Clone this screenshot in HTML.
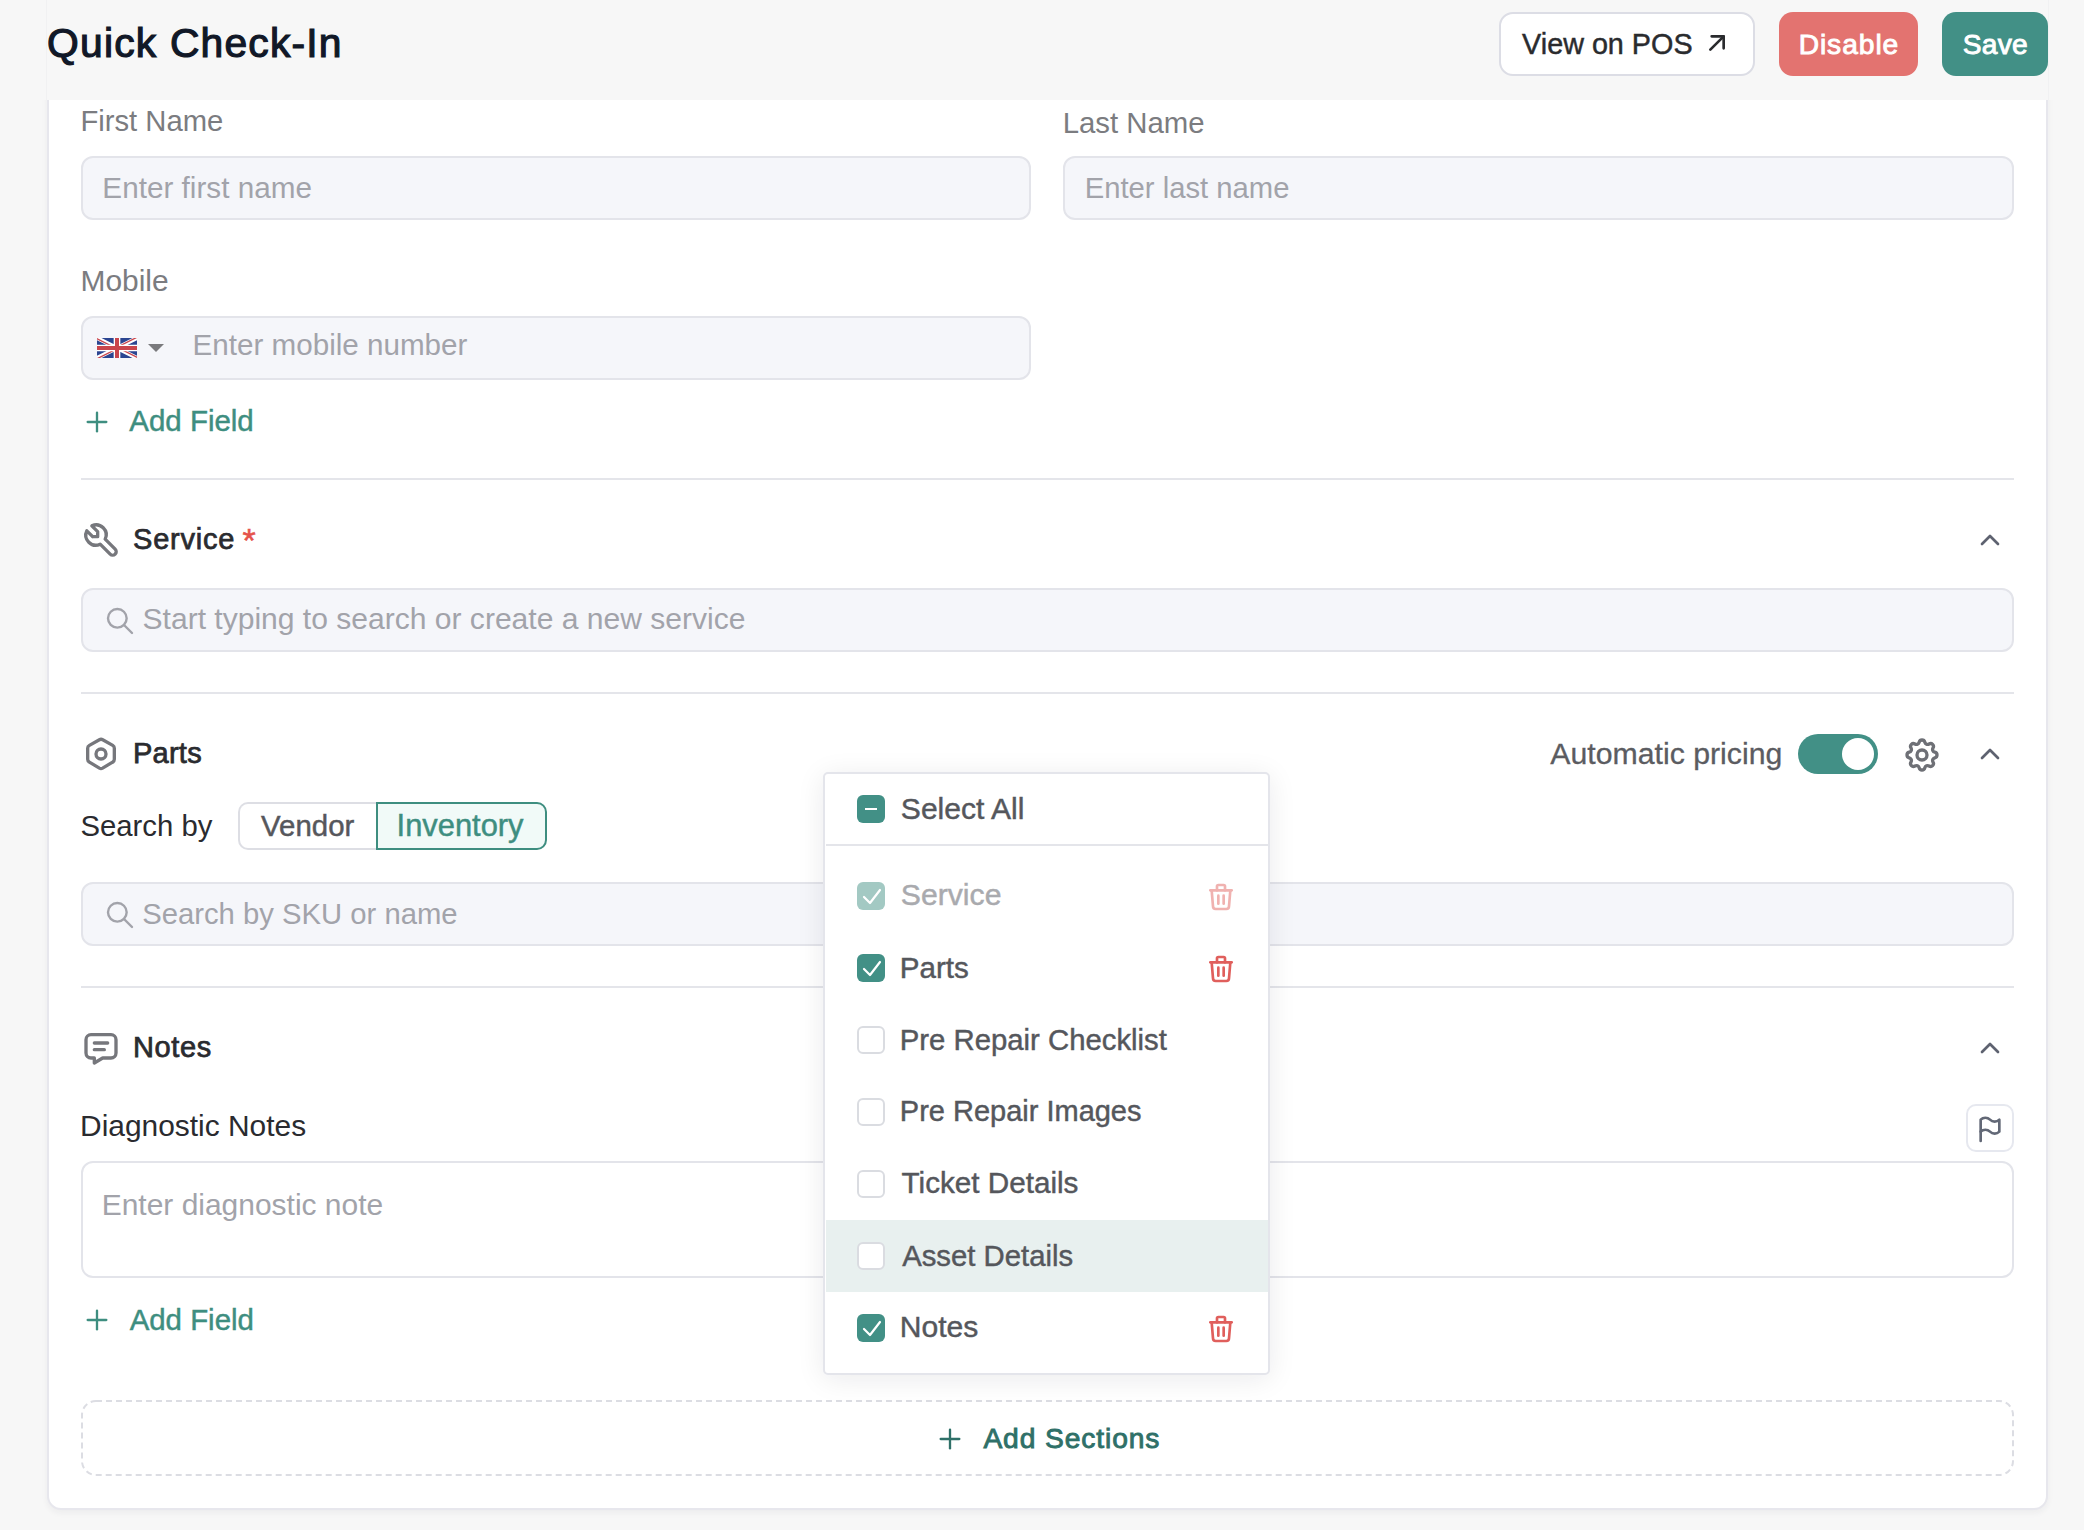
<!DOCTYPE html>
<html><head><meta charset="utf-8">
<style>
*{box-sizing:border-box;margin:0;padding:0}
html,body{width:2084px;height:1530px;overflow:hidden;background:#f7f7f7;font-family:"Liberation Sans",sans-serif}
.a{position:absolute;white-space:nowrap}
.card{position:absolute;left:47px;top:40px;width:2001px;height:1470px;background:#fff;border:2px solid #e7e7ed;border-radius:14px;box-shadow:0 3px 6px rgba(30,30,60,.05)}
.header{position:absolute;left:0;top:0;width:2084px;height:100px;background:#f7f7f7}
.btn{position:absolute;top:12px;height:64px;border-radius:14px}
.input{position:absolute;height:64px;background:#f5f6fa;border:2px solid #e3e4ea;border-radius:12px}
.div{position:absolute;left:81px;width:1933px;height:2px;background:#e4e5ea}
svg.i{position:absolute;fill:none;stroke-linecap:round;stroke-linejoin:round}
.cb{position:absolute;left:857px;width:28px;height:28px;border-radius:6px}
.cb.on{background:#429086}
.cb.dis{background:#a3c9c3}
.cb.off{background:#fff;border:2px solid #dadce1}
</style></head>
<body>
<div class="card"></div>
<div class="header"></div>
<div class="a" style="left:46px;top:0;width:1px;height:100px;background:#f1f1f2"></div>
<div class="a" style="left:2048px;top:0;width:1px;height:100px;background:#f1f1f2"></div>
<div class="btn" style="left:1499px;width:256px;background:#fff;border:2px solid #dcdde5"></div>
<div class="btn" style="left:1779px;width:139px;background:#e37370"></div>
<div class="btn" style="left:1942px;width:106px;background:#429086"></div>
<svg class="i" style="left:1701px;top:27px" width="32" height="32" viewBox="0 0 24 24" stroke="#2a2b2e" stroke-width="2"><path d="M17 7l-10 10"/><path d="M8 7l9 0l0 9"/></svg>
<div class="input" style="left:81px;top:156px;width:950px"></div>
<div class="input" style="left:1063px;top:156px;width:951px"></div>
<div class="input" style="left:81px;top:316px;width:950px"></div>
<svg class="a" style="left:97px;top:338px" width="40" height="20" viewBox="0 0 60 30">
<clipPath id="uk"><path d="M30,15 h30 v15 z v15 h-30 z h-30 v-15 z v-15 h30 z"/></clipPath>
<rect width="60" height="30" fill="#2b4591"/>
<path d="M0,0 L60,30 M60,0 L0,30" stroke="#fff" stroke-width="6"/>
<path d="M0,0 L60,30 M60,0 L0,30" clip-path="url(#uk)" stroke="#c9454c" stroke-width="4"/>
<path d="M30,0 v30 M0,15 h60" stroke="#fff" stroke-width="10"/>
<path d="M30,0 v30 M0,15 h60" stroke="#c9454c" stroke-width="6"/>
</svg>
<svg class="a" style="left:148px;top:344px" width="16" height="8" viewBox="0 0 16 8"><path d="M0 0h16l-8 8z" fill="#7a7a7d"/></svg>
<svg class="i" style="left:80.8px;top:405.7px" width="32" height="32" viewBox="0 0 24 24" stroke="#3e8e80" stroke-width="1.75"><path d="M12 5l0 14"/><path d="M5 12l14 0"/></svg>
<div class="div" style="top:478px"></div>
<svg class="i" style="left:81px;top:520px" width="40" height="40" viewBox="0 0 24 24" stroke="#76777c" stroke-width="2"><path d="M7 10h3v-3l-3.5 -3.5a6 6 0 0 1 8 8l6 6a2 2 0 0 1 -3 3l-6 -6a6 6 0 0 1 -8 -8l3.5 3.5"/></svg>
<svg class="i" style="left:1973.7px;top:523.6px" width="32" height="32" viewBox="0 0 24 24" stroke="#5e6270" stroke-width="2"><path d="M6 15l6 -6l6 6"/></svg>
<div class="input" style="left:81px;top:588px;width:1933px"></div>
<svg class="i" style="left:103.5px;top:604.8px" width="32" height="32" viewBox="0 0 24 24" stroke="#a2a3aa" stroke-width="1.8"><path d="M10 10m-7 0a7 7 0 1 0 14 0a7 7 0 1 0 -14 0"/><path d="M21 21l-6 -6"/></svg>
<div class="div" style="top:692px"></div>
<svg class="i" style="left:81px;top:734.3px" width="40" height="40" viewBox="0 0 24 24" stroke="#76777c" stroke-width="2"><path d="M19 6.84a2.016 2.016 0 0 1 1 1.754v6.554c0 .728 -.394 1.4 -1.03 1.753l-6 3.582a2.033 2.033 0 0 1 -1.940 0l-6 -3.582a2.010 2.010 0 0 1 -1.030 -1.753v-6.555c0 -.728 .394 -1.4 1.030 -1.753l6 -3.400a2.040 2.040 0 0 1 2 0l6 3.400h-.03z"/><path d="M12 12m-3 0a3 3 0 1 0 6 0a3 3 0 1 0 -6 0"/></svg>
<div class="a" style="left:1798px;top:734px;width:80px;height:40px;border-radius:20px;background:#429086"></div>
<div class="a" style="left:1842px;top:738px;width:32px;height:32px;border-radius:16px;background:#fff"></div>
<svg class="i" style="left:1902.3px;top:734.5px" width="40" height="40" viewBox="0 0 24 24" stroke="#6e7076" stroke-width="2"><path d="M10.325 4.317c.426 -1.756 2.924 -1.756 3.35 0a1.724 1.724 0 0 0 2.573 1.066c1.543 -.94 3.31 .826 2.37 2.37a1.724 1.724 0 0 0 1.065 2.572c1.756 .426 1.756 2.924 0 3.35a1.724 1.724 0 0 0 -1.066 2.573c.94 1.543 -.826 3.31 -2.37 2.370a1.724 1.724 0 0 0 -2.572 1.065c-.426 1.756 -2.924 1.756 -3.35 0a1.724 1.724 0 0 0 -2.573 -1.066c-1.543 .94 -3.31 -.826 -2.37 -2.37a1.724 1.724 0 0 0 -1.065 -2.572c-1.756 -.426 -1.756 -2.924 0 -3.35a1.724 1.724 0 0 0 1.066 -2.573c-.94 -1.543 .826 -3.31 2.37 -2.37c1 .608 2.296 .07 2.572 -1.065z"/><path d="M9 12a3 3 0 1 0 6 0a3 3 0 0 0 -6 0"/></svg>
<svg class="i" style="left:1973.7px;top:737.8px" width="32" height="32" viewBox="0 0 24 24" stroke="#5e6270" stroke-width="2"><path d="M6 15l6 -6l6 6"/></svg>
<div class="a" style="left:238px;top:802px;width:140px;height:48px;border:2px solid #dddee4;border-right:none;border-radius:10px 0 0 10px;background:#fff"></div>
<div class="a" style="left:376px;top:802px;width:171px;height:48px;border:2px solid #3e8e80;border-radius:0 10px 10px 0;background:#f1faf8"></div>
<div class="input" style="left:81px;top:882px;width:1933px"></div>
<svg class="i" style="left:103.5px;top:898.8px" width="32" height="32" viewBox="0 0 24 24" stroke="#a2a3aa" stroke-width="1.8"><path d="M10 10m-7 0a7 7 0 1 0 14 0a7 7 0 1 0 -14 0"/><path d="M21 21l-6 -6"/></svg>
<div class="div" style="top:986px"></div>
<svg class="i" style="left:81px;top:1028px" width="40" height="40" viewBox="0 0 24 24" stroke="#76777c" stroke-width="2"><path d="M8 9h8"/><path d="M8 13h6"/><path d="M18 4a3 3 0 0 1 3 3v8a3 3 0 0 1 -3 3h-5l-5 3v-3h-2a3 3 0 0 1 -3 -3v-8a3 3 0 0 1 3 -3h12z"/></svg>
<svg class="i" style="left:1973.7px;top:1031.6px" width="32" height="32" viewBox="0 0 24 24" stroke="#5e6270" stroke-width="2"><path d="M6 15l6 -6l6 6"/></svg>
<div class="a" style="left:1966px;top:1104px;width:48px;height:48px;border:2px solid #e6e8ef;border-radius:10px;background:#fff"></div>
<svg class="i" style="left:1973.7px;top:1112.5px" width="32" height="32" viewBox="0 0 24 24" stroke="#626876" stroke-width="2"><path d="M5 5a5 5 0 0 1 7 0a5 5 0 0 0 7 0v9a5 5 0 0 1 -7 0a5 5 0 0 0 -7 0v-9z"/><path d="M5 21v-7"/></svg>
<div class="a" style="left:81px;top:1161px;width:1933px;height:117px;border:2px solid #e3e4ea;border-radius:12px;background:#fff"></div>
<svg class="i" style="left:80.8px;top:1304.1px" width="32" height="32" viewBox="0 0 24 24" stroke="#3e8e80" stroke-width="1.75"><path d="M12 5l0 14"/><path d="M5 12l14 0"/></svg>
<svg class="a" style="left:81px;top:1400px" width="1933" height="76"><rect x="1" y="1" width="1931" height="74" rx="14" fill="none" stroke="#dcdde3" stroke-width="2" stroke-dasharray="6 4"/></svg>
<svg class="i" style="left:934px;top:1423.2px" width="32" height="32" viewBox="0 0 24 24" stroke="#2f7068" stroke-width="1.75"><path d="M12 5l0 14"/><path d="M5 12l14 0"/></svg>
<div class="a" style="left:242.5px;top:523px;font-size:34px;line-height:34px;color:#e5534b;-webkit-text-stroke:0.5px #e5534b">*</div>
<div class="a" style="left:47.07px;top:19.26px;font-size:40.80px;line-height:49px;color:#111827;-webkit-text-stroke:1.2px #111827;letter-spacing:1.200px;">Quick Check-In</div>
<div class="a" style="left:1522.10px;top:26.64px;font-size:28.75px;line-height:35px;color:#2a2b2e;-webkit-text-stroke:0.45px #2a2b2e;">View on POS</div>
<div class="a" style="left:1798.64px;top:27.13px;font-size:28.20px;line-height:34px;color:#fff;-webkit-text-stroke:0.9px #fff;letter-spacing:0.937px;">Disable</div>
<div class="a" style="left:1962.77px;top:27.13px;font-size:28.20px;line-height:34px;color:#fff;-webkit-text-stroke:0.9px #fff;letter-spacing:0.252px;">Save</div>
<div class="a" style="left:80.40px;top:104.37px;font-size:29.23px;line-height:35px;color:#7b7c80;">First Name</div>
<div class="a" style="left:102.36px;top:169.66px;font-size:29.70px;line-height:36px;color:#a2a3aa;">Enter first name</div>
<div class="a" style="left:1062.69px;top:104.53px;font-size:29.35px;line-height:35px;color:#7b7c80;">Last Name</div>
<div class="a" style="left:1084.70px;top:170.87px;font-size:29.24px;line-height:35px;color:#a2a3aa;">Enter last name</div>
<div class="a" style="left:80.44px;top:263.38px;font-size:29.94px;line-height:36px;color:#7b7c80;">Mobile</div>
<div class="a" style="left:192.57px;top:326.74px;font-size:29.61px;line-height:36px;color:#a2a3aa;">Enter mobile number</div>
<div class="a" style="left:129.27px;top:403.29px;font-size:29.47px;line-height:35px;color:#3e8e80;-webkit-text-stroke:0.45px #3e8e80;">Add Field</div>
<div class="a" style="left:133.06px;top:522.25px;font-size:29.00px;line-height:35px;color:#2a2b2f;-webkit-text-stroke:0.75px #2a2b2f;letter-spacing:0.759px;">Service</div>
<div class="a" style="left:142.54px;top:601.39px;font-size:30.06px;line-height:36px;color:#a2a3aa;">Start typing to search or create a new service</div>
<div class="a" style="left:133.00px;top:736.25px;font-size:29.00px;line-height:35px;color:#2a2b2f;-webkit-text-stroke:0.75px #2a2b2f;letter-spacing:0.248px;">Parts</div>
<div class="a" style="left:1550.29px;top:735.52px;font-size:30.25px;line-height:36px;color:#5b5c61;-webkit-text-stroke:0.3px #5b5c61;">Automatic pricing</div>
<div class="a" style="left:80.47px;top:808.25px;font-size:29.29px;line-height:35px;color:#2a2b2f;">Search by</div>
<div class="a" style="left:261.10px;top:808.21px;font-size:29.42px;line-height:35px;color:#56575c;-webkit-text-stroke:0.45px #56575c;">Vendor</div>
<div class="a" style="left:396.57px;top:806.70px;font-size:30.89px;line-height:37px;color:#3e8e80;-webkit-text-stroke:0.45px #3e8e80;">Inventory</div>
<div class="a" style="left:142.17px;top:896.86px;font-size:29.25px;line-height:35px;color:#a2a3aa;">Search by SKU or name</div>
<div class="a" style="left:133.00px;top:1030.25px;font-size:29.00px;line-height:35px;color:#2a2b2f;-webkit-text-stroke:0.75px #2a2b2f;letter-spacing:0.630px;">Notes</div>
<div class="a" style="left:80.05px;top:1107.53px;font-size:29.92px;line-height:36px;color:#2a2b2f;">Diagnostic Notes</div>
<div class="a" style="left:101.74px;top:1186.82px;font-size:29.96px;line-height:36px;color:#a2a3aa;">Enter diagnostic note</div>
<div class="a" style="left:129.67px;top:1301.70px;font-size:29.42px;line-height:35px;color:#3e8e80;-webkit-text-stroke:0.45px #3e8e80;">Add Field</div>
<div class="a" style="left:983.39px;top:1421.03px;font-size:28.20px;line-height:34px;color:#2f7068;-webkit-text-stroke:0.9px #2f7068;letter-spacing:0.900px;">Add Sections</div>
<div class="a" style="left:823px;top:772px;width:447px;height:603px;background:#fff;border:2px solid #e4e5eb;border-radius:5px;box-shadow:0 4px 28px rgba(20,20,40,.085)"></div>
<div class="cb on" style="top:795px"></div>
<div class="a" style="left:865px;top:807.5px;width:12px;height:2.6px;background:#fff"></div>
<div class="a" style="left:826px;top:844px;width:442px;height:2px;background:#e4e5ea"></div>
<div class="a" style="left:826px;top:1220px;width:442px;height:72px;background:#e8f0ef"></div>
<div class="cb dis" style="top:882px"></div>
<svg class="a" style="left:857px;top:882px" width="28" height="28"><path d="M7 15l6 6l10-13" fill="none" stroke="#fff" stroke-width="2.2" stroke-linecap="round" stroke-linejoin="round"/></svg>
<svg class="i" style="left:1205px;top:881.3px" width="32" height="32" viewBox="0 0 24 24" stroke="#f0b2b0" stroke-width="2"><path d="M4 7l16 0"/><path d="M10 11l0 6"/><path d="M14 11l0 6"/><path d="M5 7l1 12a2 2 0 0 0 2 2h8a2 2 0 0 0 2 -2l1 -12"/><path d="M9 7v-3a1 1 0 0 1 1 -1h4a1 1 0 0 1 1 1v3"/></svg>
<div class="cb on" style="top:954px"></div>
<svg class="a" style="left:857px;top:954px" width="28" height="28"><path d="M7 15l6 6l10-13" fill="none" stroke="#fff" stroke-width="2.2" stroke-linecap="round" stroke-linejoin="round"/></svg>
<svg class="i" style="left:1205px;top:953.3px" width="32" height="32" viewBox="0 0 24 24" stroke="#e05f5c" stroke-width="2"><path d="M4 7l16 0"/><path d="M10 11l0 6"/><path d="M14 11l0 6"/><path d="M5 7l1 12a2 2 0 0 0 2 2h8a2 2 0 0 0 2 -2l1 -12"/><path d="M9 7v-3a1 1 0 0 1 1 -1h4a1 1 0 0 1 1 1v3"/></svg>
<div class="cb off" style="top:1026px"></div>
<div class="cb off" style="top:1098px"></div>
<div class="cb off" style="top:1170px"></div>
<div class="cb off" style="top:1242px"></div>
<div class="cb on" style="top:1314px"></div>
<svg class="a" style="left:857px;top:1314px" width="28" height="28"><path d="M7 15l6 6l10-13" fill="none" stroke="#fff" stroke-width="2.2" stroke-linecap="round" stroke-linejoin="round"/></svg>
<svg class="i" style="left:1205px;top:1313.3px" width="32" height="32" viewBox="0 0 24 24" stroke="#e05f5c" stroke-width="2"><path d="M4 7l16 0"/><path d="M10 11l0 6"/><path d="M14 11l0 6"/><path d="M5 7l1 12a2 2 0 0 0 2 2h8a2 2 0 0 0 2 -2l1 -12"/><path d="M9 7v-3a1 1 0 0 1 1 -1h4a1 1 0 0 1 1 1v3"/></svg>
<div class="a" style="left:900.86px;top:790.99px;font-size:30.04px;line-height:36px;color:#55575c;-webkit-text-stroke:0.45px #55575c;">Select All</div>
<div class="a" style="left:900.86px;top:877.15px;font-size:30.16px;line-height:36px;color:#a9aaae;-webkit-text-stroke:0.45px #a9aaae;">Service</div>
<div class="a" style="left:899.80px;top:949.85px;font-size:29.58px;line-height:35px;color:#55575c;-webkit-text-stroke:0.45px #55575c;">Parts</div>
<div class="a" style="left:899.82px;top:1021.94px;font-size:29.31px;line-height:35px;color:#55575c;-webkit-text-stroke:0.45px #55575c;">Pre Repair Checklist</div>
<div class="a" style="left:899.85px;top:1094.06px;font-size:28.99px;line-height:35px;color:#55575c;-webkit-text-stroke:0.45px #55575c;">Pre Repair Images</div>
<div class="a" style="left:901.56px;top:1165.32px;font-size:29.67px;line-height:36px;color:#55575c;-webkit-text-stroke:0.45px #55575c;">Ticket Details</div>
<div class="a" style="left:902.17px;top:1237.95px;font-size:29.30px;line-height:35px;color:#55575c;-webkit-text-stroke:0.45px #55575c;">Asset Details</div>
<div class="a" style="left:899.76px;top:1309.17px;font-size:30.09px;line-height:36px;color:#55575c;-webkit-text-stroke:0.45px #55575c;">Notes</div>
</body></html>
